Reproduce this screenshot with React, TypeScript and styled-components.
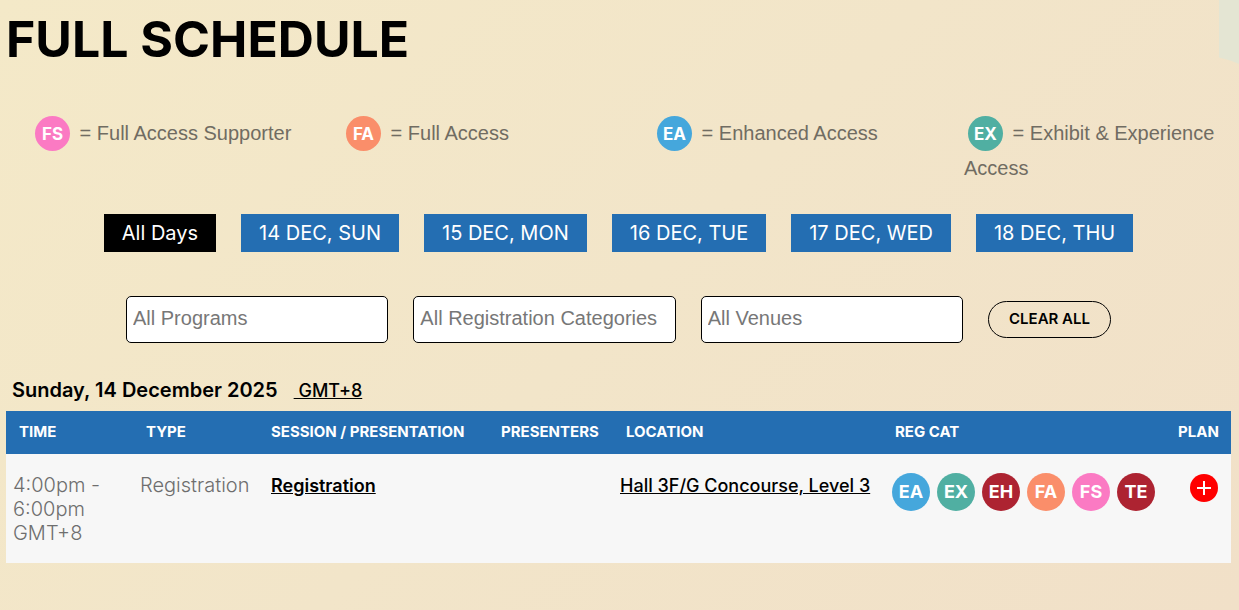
import React from "react";
import styled, { createGlobalStyle } from "styled-components";

const GlobalStyle = createGlobalStyle`
  *, *::before, *::after { box-sizing: border-box; }
  html { min-height: 100%; background: linear-gradient(135deg, #f4e9c8 0%, #f2e5c9 50%, #f1e0c8 100%); }
  body {
    margin: 0;
    overflow-x: hidden;
    font-family: Inter, "Liberation Sans", sans-serif;
    font-size: 20px;
    line-height: 24px;
    color: #000;
  }
`;

type Code = "FS" | "FA" | "EA" | "EX" | "EH" | "TE";

const badgeColors: Record<Code, string> = {
  FS: "#fb7ac3",
  FA: "#fa8e6a",
  EA: "#45a7dc",
  EX: "#50afa2",
  EH: "#ad2331",
  TE: "#ad2331",
};

const Page = styled.main`
  position: relative;
  padding: 9px 8px 24px 6px;
`;

const CornerShape = styled.div`
  position: absolute;
  top: 0;
  right: 0;
  width: 20px;
  height: 64px;
  background: #e4e5d3;
  clip-path: polygon(0 0, 100% 0, 100% 100%, 60% 95%, 0 90%);
`;

const Title = styled.h1`
  margin: 0;
  font-size: 50px;
  line-height: 60px;
  font-weight: 700;
`;

const Legend = styled.ul`
  display: grid;
  grid-template-columns: repeat(4, 1fr);
  column-gap: 44px;
  margin: 47px 0 0;
  padding: 0 0 0 25px;
  list-style: none;
  font-family: "Liberation Sans", Arial, sans-serif;
  line-height: 34px;
  color: #706c62;
`;

const Badge = styled.span<{ $code: Code; $size: number }>`
  display: inline-flex;
  align-items: center;
  justify-content: center;
  width: ${(p) => p.$size}px;
  height: ${(p) => p.$size}px;
  border-radius: 50%;
  background: ${(p) => badgeColors[p.$code]};
  color: #fff;
  font-family: Inter, sans-serif;
  font-size: 18px;
  line-height: 20px;
  font-weight: 700;
`;

const LegendBadge = styled(Badge)`
  margin: -2px 4px 0;
  font-size: 17px;
  vertical-align: middle;
`;

const DayTabs = styled.nav`
  display: flex;
  flex-wrap: wrap;
  justify-content: center;
  gap: 25px;
  margin-top: 29px;
`;

const DayTab = styled.button<{ $active?: boolean }>`
  height: 38px;
  padding: 0 18px;
  border: 0;
  background: ${(p) => (p.$active ? "#000" : "#246eb2")};
  color: #fff;
  font: 400 20px/24px Inter, sans-serif;
  cursor: pointer;
`;

const Filters = styled.form`
  display: flex;
  align-items: center;
  justify-content: center;
  gap: 25px;
  margin: 44px 120px 0;
`;

const FilterInput = styled.input`
  flex: 1 1 0;
  min-width: 0;
  height: 47px;
  padding: 0 6px 3px;
  border: 1px solid #000;
  border-radius: 5px;
  background: #fff;
  font: 20px/24px "Liberation Sans", Arial, sans-serif;
  &::placeholder { color: #777; opacity: 1; }
`;

const ClearButton = styled.button`
  height: 37px;
  padding: 0 20px 2px;
  border: 1px solid #000;
  border-radius: 19px;
  background: transparent;
  color: #000;
  font: 600 15px/20px Inter, sans-serif;
  white-space: nowrap;
  cursor: pointer;
`;

const DayHeading = styled.div`
  display: flex;
  align-items: baseline;
  gap: 16px;
  margin-top: 35px;
  padding: 0 6px 8px;
`;

const DayTitle = styled.h2`
  margin: 0;
  font-size: 20px;
  line-height: 24px;
  font-weight: 600;
`;

const TextLink = styled.a<{ $weight: number }>`
  color: #000;
  font-size: 18px;
  line-height: 24px;
  font-weight: ${(p) => p.$weight};
  white-space: nowrap;
  text-decoration: underline;
`;

const Schedule = styled.table`
  width: 100%;
  table-layout: fixed;
  border-collapse: collapse;
  text-align: left;
`;

const Col = styled.col<{ $width: number }>`
  width: ${(p) => p.$width}px;
`;

const HeadCell = styled.th`
  height: 43px;
  padding: 0 12px 2px 13px;
  background: #246eb2;
  color: #fff;
  font-size: 15px;
  line-height: 20px;
  font-weight: 700;
  white-space: nowrap;
`;

const Cell = styled.td<{ $inset?: boolean }>`
  height: 109px;
  padding: 19px 7px 18px ${(p) => (p.$inset ? 13 : 7)}px;
  background: #f7f7f7;
  color: #6e6e6e;
  font-weight: 300;
  vertical-align: top;
`;

const BadgeRow = styled.div`
  display: flex;
  gap: 7px;
  padding-left: 3px;
`;

const PlanCell = styled(Cell)`
  padding-right: 13px;
  text-align: right;
`;

const AddButton = styled.button`
  display: inline-flex;
  align-items: center;
  justify-content: center;
  width: 28px;
  height: 28px;
  margin-top: 1px;
  padding: 0;
  border: 0;
  border-radius: 50%;
  background: #f00;
  color: #fff;
  cursor: pointer;
`;

const legend: { code: Code; label: string }[] = [
  { code: "FS", label: "Full Access Supporter" },
  { code: "FA", label: "Full Access" },
  { code: "EA", label: "Enhanced Access" },
  { code: "EX", label: "Exhibit & Experience Access" },
];

const days = ["All Days", "14 DEC, SUN", "15 DEC, MON", "16 DEC, TUE", "17 DEC, WED", "18 DEC, THU"];
const filters = ["All Programs", "All Registration Categories", "All Venues"];

const columns = [
  { name: "TIME", width: 127 },
  { name: "TYPE", width: 125 },
  { name: "SESSION / PRESENTATION", width: 230 },
  { name: "PRESENTERS", width: 125 },
  { name: "LOCATION", width: 269 },
  { name: "REG CAT", width: 283 },
  { name: "PLAN", width: 66 },
];

const categories: Code[] = ["EA", "EX", "EH", "FA", "FS", "TE"];

export default function App() {
  const [day, setDay] = React.useState(days[0]);
  return (
    <>
      <GlobalStyle />
      <Page>
        <CornerShape />
        <Title>FULL SCHEDULE</Title>
        <Legend>
          {legend.map((item) => (
            <li key={item.code}>
              <LegendBadge $code={item.code} $size={35}>{item.code}</LegendBadge>
              {" = " + item.label}
            </li>
          ))}
        </Legend>
        <DayTabs aria-label="Days">
          {days.map((d) => (
            <DayTab key={d} type="button" $active={d === day} onClick={() => setDay(d)}>
              {d}
            </DayTab>
          ))}
        </DayTabs>
        <Filters>
          {filters.map((f) => (
            <FilterInput key={f} type="text" placeholder={f} aria-label={f} />
          ))}
          <ClearButton type="reset">CLEAR ALL</ClearButton>
        </Filters>
        <DayHeading>
          <DayTitle>Sunday, 14 December 2025</DayTitle>
          <TextLink href="#timezone" $weight={500}>&nbsp;GMT+8</TextLink>
        </DayHeading>
        <Schedule>
          <colgroup>
            {columns.map((c) => (
              <Col key={c.name} $width={c.width} />
            ))}
          </colgroup>
          <thead>
            <tr>
              {columns.map((c) => (
                <HeadCell key={c.name} scope="col">{c.name}</HeadCell>
              ))}
            </tr>
          </thead>
          <tbody>
            <tr>
              <Cell>4:00pm - 6:00pm GMT+8</Cell>
              <Cell>Registration</Cell>
              <Cell $inset>
                <TextLink href="#session" $weight={600}>Registration</TextLink>
              </Cell>
              <Cell />
              <Cell>
                <TextLink href="#location" $weight={500}>Hall 3F/G Concourse, Level 3</TextLink>
              </Cell>
              <Cell>
                <BadgeRow>
                  {categories.map((c) => (
                    <Badge key={c} $code={c} $size={38}>{c}</Badge>
                  ))}
                </BadgeRow>
              </Cell>
              <PlanCell>
                <AddButton type="button" aria-label="Add to plan">
                  <svg width="16" height="16" viewBox="0 0 16 16" fill="none" stroke="currentColor" strokeWidth="2">
                    <path d="M8 1v14M1 8h14" />
                  </svg>
                </AddButton>
              </PlanCell>
            </tr>
          </tbody>
        </Schedule>
      </Page>
    </>
  );
}
